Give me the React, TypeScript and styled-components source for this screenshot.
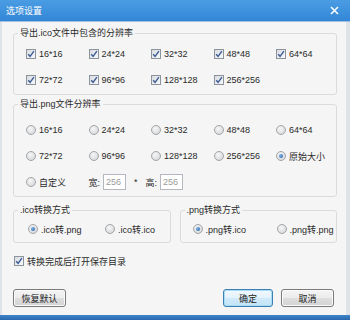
import React from 'react';
import styled, { createGlobalStyle } from 'styled-components';

const Global = createGlobalStyle`
  html, body {
    margin: 0;
    padding: 0;
  }
  body {
    width: 350px;
    height: 320px;
    overflow: hidden;
    font-family: "Liberation Sans", "Noto Sans CJK SC", sans-serif;
    font-size: 9px;
    color: #2a2a2a;
  }
`;

const Window = styled.div`
  width: 350px;
  height: 320px;
  display: flex;
  flex-direction: column;
  background: #f5f5f5;
`;

const TitleBar = styled.div`
  height: 22px;
  flex: none;
  display: flex;
  align-items: center;
  justify-content: space-between;
  padding: 0 11px 0 6px;
  background: linear-gradient(#4a9de3, #3386d6);
  color: #fff;
  font-size: 9px;
  border-bottom: 1px solid #9fc0de;
  box-sizing: border-box;
`;

const Body = styled.div`
  flex: 1;
  display: flex;
  flex-direction: column;
  padding: 4px 9px 8px 11px;
  border-left: 2px solid #dde3e9;
  border-right: 4px solid #dde3e9;
`;

const BottomEdge = styled.div`
  height: 5px;
  flex: none;
  background: linear-gradient(#3f84c9, #2a68ad);
`;

const Group = styled.fieldset<{ $grow?: boolean; $mt?: number }>`
  margin: ${p => p.$mt ?? 0}px 0 0;
  padding: 0;
  min-width: 0;
  border: 1px solid #d9dcdf;
  border-radius: 3px;
  ${p => (p.$grow ? 'flex: 1;' : '')}
`;

const Legend = styled.legend`
  margin-left: 4px;
  padding: 0 2px;
  line-height: 14px;
`;

const Grid = styled.div<{ $col: number; $pt: number; $pb: number; $pl: number; $row: number }>`
  display: grid;
  grid-template-columns: repeat(5, ${p => p.$col}px);
  grid-auto-rows: ${p => p.$row}px;
  padding: ${p => p.$pt}px 0 ${p => p.$pb}px ${p => p.$pl}px;
  align-items: center;
`;

const Item = styled.label`
  display: flex;
  align-items: center;
  gap: 3px;
  white-space: nowrap;
`;

const Box = styled.span`
  width: 10px;
  height: 10px;
  box-sizing: border-box;
  border: 1px solid #8d939b;
  background: linear-gradient(135deg, #d8dce2, #f7f8fa);
  display: flex;
  align-items: center;
  justify-content: center;
  flex: none;
`;

const Dot = styled.span<{ $on?: boolean }>`
  width: 10px;
  height: 10px;
  box-sizing: border-box;
  border-radius: 50%;
  border: 1px solid #a3a5a8;
  background: radial-gradient(circle at 40% 35%, #f7f7f7, #cfd1d3);
  display: flex;
  align-items: center;
  justify-content: center;
  flex: none;
  &::after {
    content: '';
    display: ${p => (p.$on ? 'block' : 'none')};
    width: 4px;
    height: 4px;
    border-radius: 50%;
    background: radial-gradient(circle at 35% 35%, #7fb6ec, #1d56a0);
  }
`;

const Check = () => (
  <Box>
    <svg width="8" height="8" viewBox="0 0 8 8">
      <path d="M1.2 4.2 L3.1 6.3 L6.9 1.2" fill="none" stroke="#3e5c95" strokeWidth="1.4" />
    </svg>
  </Box>
);

const SizeRow = styled.div`
  grid-column: 2 / span 4;
  display: flex;
  align-items: center;
`;

const SizeLabel = styled.span`
  margin-right: 3px;
`;

const Star = styled.span`
  margin: 0 8px;
`;

const NumBox = styled.input`
  width: 23px;
  height: 16px;
  box-sizing: border-box;
  border: 1px solid #b4b8be;
  background: #fff;
  color: #9a9a9a;
  font: inherit;
  padding: 0 2px;
  outline: none;
`;

const Pair = styled.div`
  display: flex;
  gap: 9px;
  margin-top: 6px;
`;

const CheckRow = styled.label`
  display: flex;
  align-items: center;
  gap: 3px;
  height: 16px;
  margin-top: 10px;
  padding-left: 1px;
`;

const Footer = styled.div`
  margin-top: auto;
  display: flex;
  justify-content: space-between;
  align-items: flex-end;
  padding-right: 3px;
`;

const Buttons = styled.div`
  display: flex;
  gap: 8px;
`;

const Button = styled.button<{ $primary?: boolean }>`
  height: 18px;
  width: ${p => (p.$primary ? 50 : 53)}px;
  box-sizing: border-box;
  padding: 0;
  font: inherit;
  color: #222;
  border-radius: 3px;
  border: 1px solid ${p => (p.$primary ? '#3c7fb1' : '#7a7a7a')};
  background: ${p =>
    p.$primary
      ? 'linear-gradient(#f1f8fd, #e3f2fb 50%, #d0eaf9 51%, #c3e3f6)'
      : 'linear-gradient(#f4f4f4, #ececec 50%, #dedede 51%, #d3d3d3)'};
  box-shadow: inset 0 0 0 1px ${p => (p.$primary ? '#a6dcf6' : '#fbfbfb')};
`;

const ico = ['16*16', '24*24', '32*32', '48*48', '64*64', '72*72', '96*96', '128*128', '256*256'];
const png = ['16*16', '24*24', '32*32', '48*48', '64*64', '72*72', '96*96', '128*128', '256*256'];

export default function App() {
  return (
    <Window>
      <Global />
      <TitleBar>
        <span>选项设置</span>
        <svg width="9" height="9" viewBox="0 0 9 9">
          <path d="M1 1 L8 8 M8 1 L1 8" stroke="#fff" strokeWidth="1.5" />
        </svg>
      </TitleBar>
      <Body>
        <Group>
          <Legend>导出.ico文件中包含的分辨率</Legend>
          <Grid $col={62.5} $row={26} $pt={1} $pb={1} $pl={12}>
            {ico.map(s => (
              <Item key={s}>
                <Check />
                {s}
              </Item>
            ))}
          </Grid>
        </Group>

        <Group $mt={2}>
          <Legend>导出.png文件分辨率</Legend>
          <Grid $col={62.5} $row={26} $pt={6} $pb={1} $pl={12}>
            {png.map(s => (
              <Item key={s}>
                <Dot />
                {s}
              </Item>
            ))}
            <Item>
              <Dot $on />
              原始大小
            </Item>
            <Item>
              <Dot />
              自定义
            </Item>
            <SizeRow>
              <SizeLabel>宽:</SizeLabel>
              <NumBox readOnly value="256" />
              <Star>*</Star>
              <SizeLabel>高:</SizeLabel>
              <NumBox readOnly value="256" />
            </SizeRow>
          </Grid>
        </Group>

        <Pair>
          <Group $grow>
            <Legend>.ico转换方式</Legend>
            <Grid $col={77} $row={22} $pt={1} $pb={2} $pl={14}>
              <Item>
                <Dot $on />
                .ico转.png
              </Item>
              <Item>
                <Dot />
                .ico转.ico
              </Item>
            </Grid>
          </Group>
          <Group $grow>
            <Legend>.png转换方式</Legend>
            <Grid $col={84} $row={22} $pt={1} $pb={2} $pl={12}>
              <Item>
                <Dot $on />
                .png转.ico
              </Item>
              <Item>
                <Dot />
                .png转.png
              </Item>
            </Grid>
          </Group>
        </Pair>

        <CheckRow>
          <Check />
          转换完成后打开保存目录
        </CheckRow>

        <Footer>
          <Button>恢复默认</Button>
          <Buttons>
            <Button $primary>确定</Button>
            <Button>取消</Button>
          </Buttons>
        </Footer>
      </Body>
      <BottomEdge />
    </Window>
  );
}
